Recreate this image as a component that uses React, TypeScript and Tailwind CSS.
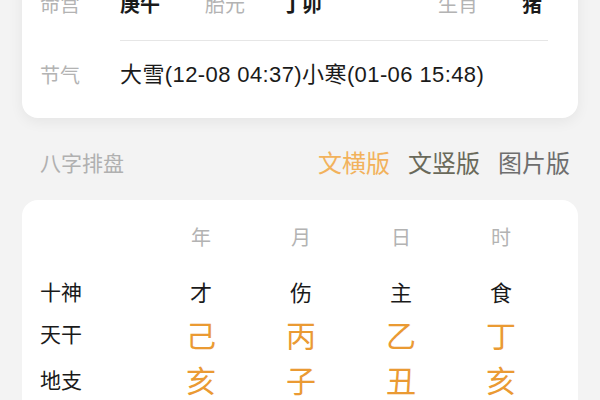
import React from "react";

const font = { fontFamily: '"Noto Sans CJK SC", "Noto Sans", sans-serif' };
const mixed = { fontFamily: '"Liberation Sans", "Noto Sans CJK SC", sans-serif' };

export default function App() {
  const cols = ["年", "月", "日", "时"];
  const shishen = ["才", "伤", "主", "食"];
  const tiangan = ["己", "丙", "乙", "丁"];
  const dizhi = ["亥", "子", "丑", "亥"];
  return (
    <div className="w-[600px] h-[400px] overflow-hidden bg-[#f3f3f3] px-[22px]" style={font}>
      <div className="mt-[-30px] bg-white rounded-[16px] pt-[20px] pb-[29px] shadow-[0_4px_14px_rgba(0,0,0,0.06)]">
        <div className="grid grid-cols-[80px_85px_77px_156px_84px_1fr] pl-[18px] h-[28px] items-center text-[20px] leading-none">
          <span className="text-[#b3b3b3]">命宫</span>
          <span className="text-[#1a1a1a] font-bold">庚午</span>
          <span className="text-[#b3b3b3]">胎元</span>
          <span className="text-[#1a1a1a] font-bold">丁卯</span>
          <span className="text-[#b3b3b3]">生肖</span>
          <span className="text-[#1a1a1a] font-bold">猪</span>
        </div>
        <div className="mt-[22px] ml-[98px] mr-[30px] h-px bg-[#e6e6e6]" />
        <div className="mt-[20px] grid grid-cols-[80px_1fr] pl-[18px] h-[28px] items-center leading-none">
          <span className="text-[20px] text-[#b3b3b3]">节气</span>
          <span className="text-[22px] tracking-[0.4px] text-[#1a1a1a]" style={mixed}>大雪(12-08 04:37)小寒(01-06 15:48)</span>
        </div>
      </div>

      <div className="mt-[29px] h-[30px] flex items-center justify-between pl-[18px] pr-[6px]">
        <span className="text-[21px] text-[#b0b0b0] leading-none">八字排盘</span>
        <div className="flex gap-[18px] text-[24px] leading-none mr-[2px]">
          <span className="text-[#f2b25c]">文横版</span>
          <span className="text-[#69695a]">文竖版</span>
          <span className="text-[#6e6e6e]">图片版</span>
        </div>
      </div>

      <div className="mt-[23px] bg-white rounded-[16px] pt-[23px] pl-[18px] h-[260px]">
        <div className="grid grid-cols-[111px_100px_100px_100px_100px] h-[28px] items-center text-[20px] leading-none text-[#b3b3b3]">
          <span />
          {cols.map((c) => (
            <span key={c} className="text-center">{c}</span>
          ))}
        </div>
        <div className="mt-[19px] grid grid-cols-[111px_100px_100px_100px_100px] h-[42px] items-center leading-none text-[#1a1a1a]">
          <span className="text-[21px]">十神</span>
          {shishen.map((c, i) => (
            <span key={i} className="text-center text-[22px]">{c}</span>
          ))}
        </div>
        <div className="grid grid-cols-[111px_100px_100px_100px_100px] h-[43px] items-center leading-none">
          <span className="text-[21px] text-[#1a1a1a]">天干</span>
          {tiangan.map((c, i) => (
            <span key={i} className="text-center text-[30px] text-[#ea9a33]">{c}</span>
          ))}
        </div>
        <div className="grid grid-cols-[111px_100px_100px_100px_100px] h-[48px] items-center leading-none">
          <span className="text-[21px] text-[#1a1a1a]">地支</span>
          {dizhi.map((c, i) => (
            <span key={i} className="text-center text-[30px] text-[#ea9a33]">{c}</span>
          ))}
        </div>
      </div>
    </div>
  );
}
